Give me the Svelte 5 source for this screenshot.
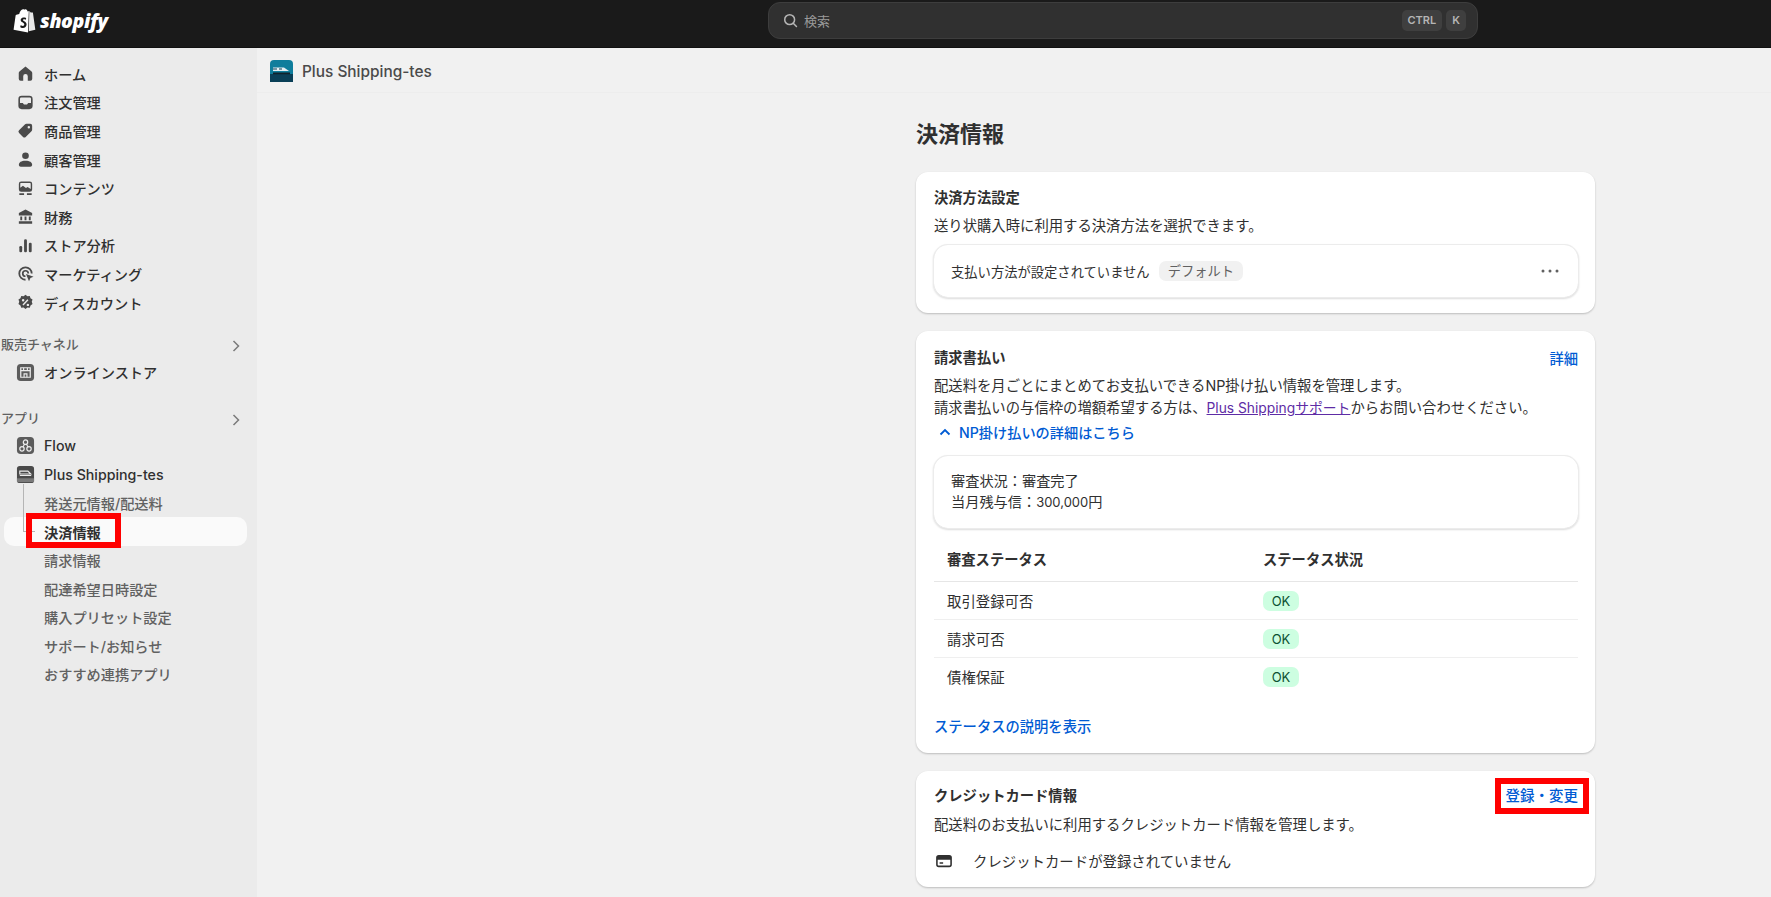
<script>
  const mainNav = [
    { label: 'ホーム', icon: 'home' },
    { label: '注文管理', icon: 'orders' },
    { label: '商品管理', icon: 'tag' },
    { label: '顧客管理', icon: 'person' },
    { label: 'コンテンツ', icon: 'content' },
    { label: '財務', icon: 'bank' },
    { label: 'ストア分析', icon: 'chart' },
    { label: 'マーケティング', icon: 'target' },
    { label: 'ディスカウント', icon: 'discount' }
  ];
  const subNav = ['発送元情報/配送料', '決済情報', '請求情報', '配達希望日時設定', '購入プリセット設定', 'サポート/お知らせ', 'おすすめ連携アプリ'];
  const rows = ['取引登録可否', '請求可否', '債権保証'];
</script>

{#snippet navIcon(name)}
  <svg class="ico" viewBox="0 0 20 20" aria-hidden="true">
    {#if name === 'home'}
      <path d="M10 2.600 3.600 8a2 2 0 0 0-.7 1.500V15.500a2 2 0 0 0 2 2H7.600v-4.600a2.400 2.400 0 0 1 4.800 0v4.600h2.700a2 2 0 0 0 2-2V9.500a2 2 0 0 0-.7-1.500z" />
    {:else if name === 'orders'}
      <path fill-rule="evenodd" d="M6 3h8a3.500 3.500 0 0 1 3.500 3.500v7A3.500 3.500 0 0 1 14 17H6a3.500 3.500 0 0 1-3.500-3.500v-7A3.500 3.500 0 0 1 6 3zM5.500 4.800a1.300 1.300 0 0 0-1.300 1.300v4.400h3l1.200 1.700h3.200l1.200-1.700h3V6.100a1.300 1.300 0 0 0-1.300-1.300z" />
    {:else if name === 'tag'}
      <path fill-rule="evenodd" d="M11 3h4a2 2 0 0 1 2 2v4a2.500 2.500 0 0 1-.7 1.700l-6.100 6.100a2 2 0 0 1-2.800 0l-4.200-4.200a2 2 0 0 1 0-2.800l6.100-6.100A2.500 2.500 0 0 1 11 3zm2.500 2.200a1.300 1.300 0 1 0 0 2.600 1.300 1.300 0 0 0 0-2.600z" />
    {:else if name === 'person'}
      <circle cx="10" cy="6" r="3.500" />
      <path d="M3 15.500c0-2.600 2.400-4.300 7-4.300s7 1.700 7 4.300c0 1.200-.9 2-2 2H5c-1.100 0-2-.8-2-2z" />
    {:else if name === 'content'}
      <path fill-rule="evenodd" d="M5.500 2.500h9A2.500 2.500 0 0 1 17 5v6a2.500 2.500 0 0 1-2.500 2.500h-9A2.500 2.500 0 0 1 3 11V5a2.500 2.500 0 0 1 2.500-2.500zM5 4.300a.8.8 0 0 0-.5.700v4.300l2.800-2.300 3.200 2.600 1.700-1.200 3.300 2V5a.8.8 0 0 0-.7-.7z" />
      <path d="M3.500 15h5v1.800h-5zM11.500 15h5v1.800h-5z" />
    {:else if name === 'bank'}
      <path fill-rule="evenodd" d="M10 2.500 3 6.300V9h14V6.300zM4.500 10h2v4h-2zm4.500 0h2v4H9zm4.500 0h2v4h-2zM3 15h14v2.500H3z" />
    {:else if name === 'chart'}
      <rect x="3.500" y="10.500" width="3" height="6.500" rx="1.300" />
      <rect x="8.500" y="3.500" width="3" height="13.500" rx="1.300" />
      <rect x="13.500" y="7" width="3" height="10" rx="1.300" />
    {:else if name === 'target'}
      <path d="M10 2.500a7.500 7.500 0 0 1 7.500 7.500h-1.900A5.600 5.600 0 1 0 10 15.600v1.900A7.500 7.500 0 0 1 10 2.500z" />
      <path d="M10 6.200a3.800 3.800 0 0 1 3.800 3.800h-1.800A2 2 0 1 0 10 12v1.800a3.800 3.800 0 0 1 0-7.600z" />
      <path d="m10.500 10.500 8 2.800-3.300 1.500-1.500 3.400z" />
    {:else}
      <path fill-rule="evenodd" d="M10 1.800l2 1.500 2.500-.2.800 2.400 2.100 1.400-.8 2.400.8 2.400-2.100 1.400-.8 2.400-2.500-.2-2 1.500-2-1.500-2.500.2-.8-2.400-2.100-1.400.8-2.400-.8-2.400 2.100-1.400.8-2.400 2.500.2zM12 6.500 6.800 12l1.100 1.100 5.200-5.500zM7.500 6.300a1.300 1.300 0 1 0 0 2.600 1.300 1.300 0 0 0 0-2.600zm5 4.900a1.300 1.300 0 1 0 0 2.600 1.300 1.300 0 0 0 0-2.600z" />
    {/if}
  </svg>
{/snippet}

<div class="app">
  <header class="topbar">
    <div class="brand">
      <svg class="bag" viewBox="0 0 24 26" aria-hidden="true">
        <path d="M16.500 3.200 15.300 3.500C14.800 2 14 1.300 13 1.300c-.4 0-.8.100-1.100.4C10 .6 7.300 2.500 6.500 6.200L3.600 7.100c-.6.200-.8.400-.9 1L.6 22.600l15.100 2.900z" fill="#fff" />
        <path d="m17 3.100 1.500 1.500 2 .1c.1 0 .3.100.3.300L23.300 22.700 16.500 24.200z" fill="#e8e8e8" />
        <path d="M13.800 10.400s-1-.5-2.200-.5c-3.200 0-3.600 2.100-3.600 2.600 0 2.500 3.800 2.500 3.800 4.700 0 .9-.6 1.500-1.500 1.500-1.200 0-2.200-1-2.200-1l-.6 2s1 1.200 2.900 1.200c2 0 3.800-1.500 3.800-4 0-2.900-3.800-3.200-3.800-4.500 0-.4.300-.8 1-.8.900 0 1.900.6 1.900.6z" fill="#1a1a1a" />
      </svg>
      <span class="wordmark">shopify</span>
    </div>
    <div class="search">
      <svg class="search-ico" viewBox="0 0 20 20" aria-hidden="true">
        <circle cx="9" cy="9" r="5.800" />
        <path d="m13.500 13.500 3.500 3.500" />
      </svg>
      <span class="search-text">検索</span>
      <kbd class="key">CTRL</kbd>
      <kbd class="key">K</kbd>
    </div>
  </header>

  <div class="body">
    <nav class="sidebar">
      <ul class="nav">
        {#each mainNav as item}
          <li class="item">{@render navIcon(item.icon)}<span>{item.label}</span></li>
        {/each}
      </ul>

      <div class="section">
        <span>販売チャネル</span>
        <svg class="chev" viewBox="0 0 10 14" aria-hidden="true"><path d="m2.500 2 5 5-5 5" /></svg>
      </div>
      <ul class="nav">
        <li class="item">
          <svg class="app-ico" viewBox="0 0 20 20" aria-hidden="true">
            <rect x="1" y="1" width="18" height="18" rx="4" fill="#5c5c5c" />
            <path d="M5 5h10v10H5z" fill="none" stroke="#ebebeb" stroke-width="1.300" />
            <path d="M5 8h10M8 5v3M12 5v3M8.500 15v-3.500h3V15" fill="none" stroke="#ebebeb" stroke-width="1.200" />
          </svg>
          <span>オンラインストア</span>
        </li>
      </ul>

      <div class="section apps">
        <span>アプリ</span>
        <svg class="chev" viewBox="0 0 10 14" aria-hidden="true"><path d="m2.500 2 5 5-5 5" /></svg>
      </div>
      <ul class="nav">
        <li class="item">
          <svg class="app-ico" viewBox="0 0 20 20" aria-hidden="true">
            <rect x="1" y="1" width="18" height="18" rx="4" fill="#5c5c5c" />
            <circle cx="10" cy="6.500" r="2.300" fill="none" stroke="#ebebeb" stroke-width="1.300" />
            <circle cx="6.300" cy="13.500" r="2.300" fill="none" stroke="#ebebeb" stroke-width="1.300" />
            <circle cx="13.700" cy="13.500" r="2.300" fill="none" stroke="#ebebeb" stroke-width="1.300" />
            <path d="m9 8.500-1.600 3M11 8.500l1.600 3" stroke="#ebebeb" stroke-width="1.200" />
          </svg>
          <span>Flow</span>
        </li>
        <li class="item">
          <svg class="app-ico" viewBox="0 0 20 20" aria-hidden="true">
            <rect x="1" y="1" width="18" height="18" rx="3" fill="#4a4a4a" />
            <path d="M4 6.500h8.500l3 3H4zM4 11h12" fill="none" stroke="#ebebeb" stroke-width="1.200" />
            <rect x="1" y="14" width="18" height="4" fill="#7a7a7a" />
          </svg>
          <span>Plus Shipping-tes</span>
        </li>
      </ul>
      <ul class="sub">
        {#each subNav as label, i}
          <li class:active={i === 1}>
            {#if i === 1}<span class="tree"></span><span class="mark nav-mark"></span>{/if}
            <span>{label}</span>
          </li>
        {/each}
      </ul>
    </nav>

    <main class="main">
      <div class="store">
        <svg class="store-ico" viewBox="0 0 23 22" aria-hidden="true">
          <rect width="23" height="22" rx="4" fill="#0f7d9c" />
          <rect y="14" width="23" height="8" fill="#0a3f57" />
          <path d="M3 7.500h11l5 3.500H3z" fill="#e6eef2" />
          <path d="M3 12.500h17v1.800H3z" fill="#10222c" />
          <path d="M3 9h4M9 9h3" stroke="#0a3f57" stroke-width="1.200" />
        </svg>
        <span>Plus Shipping-tes</span>
      </div>

      <div class="content">
        <h1>決済情報</h1>

        <section class="card">
          <h2>決済方法設定</h2>
          <p class="desc">送り状購入時に利用する決済方法を選択できます。</p>
          <div class="box method">
            <span>支払い方法が設定されていません</span>
            <span class="badge">デフォルト</span>
            <svg class="dots" viewBox="0 0 18 4" aria-hidden="true">
              <circle cx="2" cy="2" r="1.500" /><circle cx="9" cy="2" r="1.500" /><circle cx="16" cy="2" r="1.500" />
            </svg>
          </div>
        </section>

        <section class="card">
          <div class="head">
            <h2>請求書払い</h2>
            <a class="link" href="#details">詳細</a>
          </div>
          <p class="desc multi">
            配送料を月ごとにまとめてお支払いできるNP掛け払い情報を管理します。<br />
            請求書払いの与信枠の増額希望する方は、<a class="visited" href="#support">Plus Shippingサポート</a>からお問い合わせください。
          </p>
          <a class="link toggle" href="#np">
            <svg viewBox="0 0 12 8" aria-hidden="true"><path d="m1.500 6.500 4.500-4.500 4.500 4.500" /></svg>
            NP掛け払いの詳細はこちら
          </a>
          <div class="box info">
            <div>審査状況：審査完了</div>
            <div>当月残与信：<span class="amount">300,000</span>円</div>
          </div>
          <table>
            <thead>
              <tr><th class="first">審査ステータス</th><th>ステータス状況</th></tr>
            </thead>
            <tbody>
              {#each rows as row}
                <tr><td>{row}</td><td><span class="ok">OK</span></td></tr>
              {/each}
            </tbody>
          </table>
          <a class="link status" href="#status">ステータスの説明を表示</a>
        </section>

        <section class="card tight">
          <div class="head">
            <h2>クレジットカード情報</h2>
            <a class="link marked" href="#card">登録・変更<span class="mark card-mark"></span></a>
          </div>
          <p class="desc">配送料のお支払いに利用するクレジットカード情報を管理します。</p>
          <div class="credit">
            <svg viewBox="0 0 20 16" aria-hidden="true">
              <path fill-rule="evenodd" d="M4 1h12a3 3 0 0 1 3 3v8a3 3 0 0 1-3 3H4a3 3 0 0 1-3-3V4a3 3 0 0 1 3-3zm-1.200 5.500V12c0 .7.500 1.200 1.200 1.200h12c.7 0 1.200-.5 1.200-1.200V6.500zM5 9.500h4v1.600H5z" />
            </svg>
            <span>クレジットカードが登録されていません</span>
          </div>
        </section>
      </div>
    </main>
  </div>
</div>

<style>
  :global(body) {
    margin: 0;
    background: #f1f1f1;
    font-family: Inter, "Noto Sans CJK JP", sans-serif;
    color: #303030;
  }
  ul { list-style: none; margin: 0; padding: 0; }
  a { text-decoration: none; }

  .app { height: 897px; overflow: hidden; display: flex; flex-direction: column; }

  .topbar {
    flex: none;
    height: 48px;
    box-sizing: border-box;
    background: #1a1a1a;
    border-bottom: 1px solid #111;
    display: flex;
    align-items: flex-start;
    padding: 2px 0 0 13px;
  }
  .brand { display: flex; align-items: center; gap: 4px; width: 755px; height: 37px; }
  .bag { width: 23px; height: 25px; }
  .wordmark {
    color: #fff;
    font-family: "Open Sans", sans-serif;
    font-style: italic;
    font-weight: 800;
    font-size: 19.500px;
    letter-spacing: -0.4px;
  }
  .search {
    width: 710px;
    height: 37px;
    box-sizing: border-box;
    background: #303030;
    border: 1px solid #3d3d3d;
    border-radius: 12px;
    display: flex;
    align-items: center;
    padding: 0 11px 0 13px;
    gap: 4px;
  }
  .search-ico { width: 17px; height: 17px; fill: none; stroke: #b5b5b5; stroke-width: 1.800; stroke-linecap: round; }
  .search-text { flex: 1; color: #9a9a9a; font-size: 13px; margin-left: 1px; }
  .key {
    font-family: Inter, sans-serif;
    font-size: 11px;
    font-weight: 600;
    color: #b5b5b5;
    background: #3f3f3f;
    border-radius: 5px;
    height: 21px;
    line-height: 21px;
    padding: 0 6px;
  }

  .body { flex: 1; display: flex; min-height: 0; }

  .sidebar {
    flex: none;
    width: 257px;
    box-sizing: border-box;
    background: #ebebeb;
    padding-top: 11.500px;
  }
  .item {
    height: 28.600px;
    display: flex;
    align-items: center;
    gap: 9px;
    padding-left: 16px;
    font-size: 14.200px;
    font-weight: 500;
    color: #303030;
  }
  .ico { width: 19px; height: 19px; fill: #4a4a4a; flex: none; }
  .app-ico { width: 19px; height: 19px; flex: none; }
  .section {
    height: 28px;
    margin-top: 13px;
    display: flex;
    align-items: center;
    justify-content: space-between;
    padding: 0 16px 0 1px;
    font-size: 13px;
    font-weight: 500;
    color: #616161;
  }
  .section.apps { margin-top: 17px; }
  .chev { width: 10px; height: 14px; fill: none; stroke: #7a7a7a; stroke-width: 1.500; margin-top: 5px; }

  .sub li {
    position: relative;
    height: 28.600px;
    display: flex;
    align-items: center;
    padding-left: 44px;
    font-size: 14.200px;
    font-weight: 500;
    color: #616161;
  }
  .sub li.active {
    margin: 0 10px 0 4px;
    padding-left: 40px;
    background: #fafafa;
    border-radius: 10px;
    color: #303030;
    font-weight: 600;
  }
  .tree {
    position: absolute;
    left: 19px;
    top: -33px;
    width: 11px;
    height: 47px;
    border-left: 1px solid #b5b5b5;
    border-bottom: 1px solid #b5b5b5;
  }
  .mark { position: absolute; box-sizing: border-box; border: 6px solid #ff0000; }
  .nav-mark { left: 22px; top: -4px; width: 95px; height: 35px; }

  .main { flex: 1; min-width: 0; }
  .store {
    height: 45px;
    box-sizing: border-box;
    border-bottom: 1px solid #ededed;
    display: flex;
    align-items: center;
    gap: 9px;
    padding-left: 13px;
    padding-top: 2px;
    font-size: 15.400px;
    font-weight: 450;
    color: #4a4a4a;
  }
  .store-ico { width: 23px; height: 22px; }

  .content {
    width: 679px;
    margin-left: 659px;
    padding-top: 26px;
    display: flex;
    flex-direction: column;
    gap: 18px;
  }
  h1 { margin: 0 0 5px; font-size: 22px; line-height: 30px; font-weight: 700; color: #303030; }
  h2 { margin: 0; font-size: 14.300px; line-height: 20px; font-weight: 600; color: #303030; }

  .card {
    background: #fff;
    border-radius: 12px;
    padding: 16px 17px 16px 18px;
    box-shadow: 0 1px 2px rgba(0, 0, 0, 0.22);
    font-size: 14.350px;
  }
  .card.tight { padding-top: 15px; }
  .card.tight .desc { margin-top: 9px; }
  .desc { margin: 8px 0 0; font-size: 14.350px; line-height: 20px; color: #303030; }
  .desc.multi { line-height: 21.500px; margin-top: 7px; }
  .head { display: flex; justify-content: space-between; align-items: center; }
  .link { color: #005bd3; font-size: 14.300px; font-weight: 500; }
  .visited { color: #5e2ca5; text-decoration: underline; font-size: 13.800px; }

  .box {
    border-radius: 14px;
    box-shadow: 0 0 0 1px #ececec, 0 1px 2px 1px rgba(0, 0, 0, 0.14);
    box-sizing: border-box;
  }
  .method {
    margin-top: 9px;
    height: 52px;
    display: flex;
    align-items: center;
    padding: 0 19px 0 17px;
    font-size: 13.300px;
  }
  .badge {
    margin-left: 9px;
    height: 20px;
    line-height: 20px;
    padding: 0 9px;
    border-radius: 7px;
    background: #f1f1f1;
    color: #616161;
    font-size: 13.300px;
  }
  .dots { margin-left: auto; width: 18px; height: 4px; fill: #616161; }

  .toggle {
    margin-top: 3px;
    display: flex;
    align-items: center;
    gap: 8px;
    height: 20px;
    padding-left: 5px;
    font-size: 14.200px;
  }
  .toggle svg { width: 12px; height: 8px; fill: none; stroke: #005bd3; stroke-width: 1.800; }
  .info {
    margin-top: 14px;
    height: 72px;
    padding: 14px 17px;
    font-size: 14.200px;
    line-height: 21px;
  }
  .amount { font-size: 13px; }

  table { width: 100%; margin-top: 8px; border-collapse: collapse; table-layout: fixed; }
  th, td { text-align: left; padding: 0 0 0 13px; }
  th { height: 45px; font-weight: 600; border-bottom: 1px solid #e6e6e6; font-size: 14.300px; }
  th.first { width: 303px; }
  td { height: 37.200px; font-size: 14.400px; }
  tbody tr + tr td { border-top: 1px solid #efefef; }
  .ok {
    display: inline-block;
    width: 36px;
    height: 20px;
    line-height: 20px;
    text-align: center;
    background: #cdfee1;
    color: #0c5132;
    border-radius: 7px;
    font-size: 13px;
  }
  .status { display: block; margin-top: 21px; line-height: 20px; }

  .marked { position: relative; font-size: 14.500px; line-height: 20px; }
  .card-mark { left: -11px; right: -11px; top: -8px; bottom: -8px; }

  .credit {
    margin-top: 16px;
    height: 20px;
    display: flex;
    align-items: center;
    gap: 20px;
    padding-left: 1px;
    font-size: 14.400px;
  }
  .credit svg { width: 18px; height: 14px; fill: #303030; flex: none; }
</style>
